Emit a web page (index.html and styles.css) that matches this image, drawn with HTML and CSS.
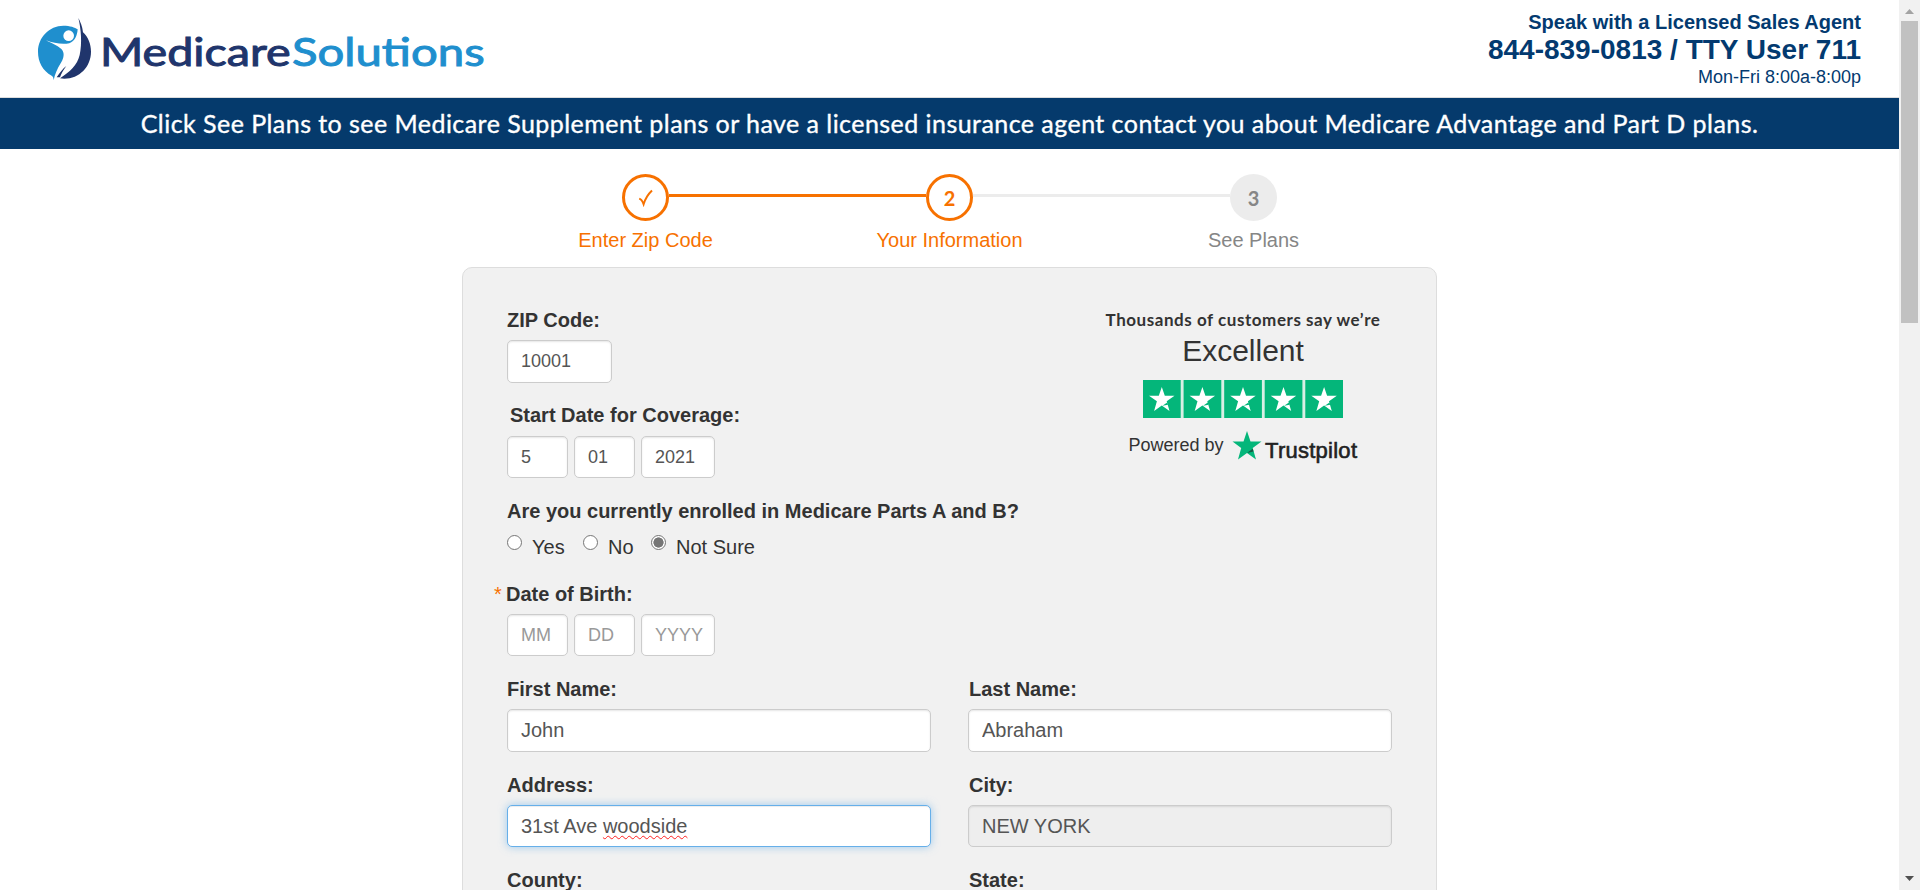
FILE: index.html
```html
<!DOCTYPE html>
<html lang="en">
<head>
<meta charset="utf-8">
<title>Medicare Solutions</title>
<link rel="stylesheet" href="styles.css">
</head>
<body>
<div class="page">
  <header class="header">
    <svg class="logo" viewBox="0 0 1440 270" role="img" aria-label="MedicareSolutions">
      <path fill="#1f8fce" d="M101 241C101 234 99 229 95 227C68 212 54 186 54 155C54 112 88 77 130 77C150 77 165 82 173 88C172 105 165 124 148 130C128 134 100 130 78 121C95 130 120 140 128 152C135 165 128 180 122 190C112 205 104 225 101 241Z"/>
      <circle cx="146" cy="107" r="16" fill="#fff"/>
      <path fill="#20356c" d="M175 54C185 73 188 86 189 97C204 110 213 132 213 155C213 200 178 236 133 236L120 235C150 215 172 195 179 165C187 130 183 85 175 54Z"/>
      <path fill="#20356c" d="M139 198C128 206 118 220 110 232L120 232C124 220 130 210 139 198Z"/>
      <text class="logo-text" x="240" y="197" textLength="572" lengthAdjust="spacingAndGlyphs" fill="#20356c" stroke="#20356c">Medicare</text>
      <text class="logo-text" x="816" y="197" textLength="578" lengthAdjust="spacingAndGlyphs" fill="#1f8fce" stroke="#1f8fce">Solutions</text>
    </svg>
    <div class="contact">
      <div class="contact-title">Speak with a Licensed Sales Agent</div>
      <div class="contact-phone">844-839-0813 / TTY User 711</div>
      <div class="contact-hours">Mon-Fri 8:00a-8:00p</div>
    </div>
  </header>
  <div class="banner"><span>Click See Plans to see Medicare Supplement plans or have a licensed insurance agent contact you about Medicare Advantage and Part D plans.</span></div>

  <div class="steps">
    <div class="step active"><div class="circle"><svg width="16" height="18" viewBox="0 0 16 18"><path d="M1.2 9.6C3 10.2 4.6 12.4 5.6 15.2C7.4 9.6 10.4 5 14 1.6" fill="none" stroke="#f77100" stroke-width="2"/></svg></div><div class="step-name">Enter Zip Code</div></div>
    <div class="line line-active"></div>
    <div class="step active"><div class="circle">2</div><div class="step-name">Your Information</div></div>
    <div class="line"></div>
    <div class="step"><div class="circle">3</div><div class="step-name">See Plans</div></div>
  </div>

  <main class="panel">
    <form class="form">
      <div class="row"><label>ZIP Code:</label><input class="input small zip" value="10001"></div>
      <div class="row row-tall start"><label>Start Date for Coverage:</label>
        <div class="date"><input class="input small" value="5"><input class="input small" value="01"><input class="input small year" value="2021"></div></div>
      <div class="row row-radio"><label>Are you currently enrolled in Medicare Parts A and B?</label>
        <div class="radios"><span class="radio"></span><span class="choice yes">Yes</span><span class="radio"></span><span class="choice no">No</span><span class="radio checked"></span><span class="choice">Not Sure</span></div></div>
      <div class="row dob"><label><span class="star">*</span>Date of Birth:</label>
        <div class="date"><input class="input small" placeholder="MM"><input class="input small" placeholder="DD"><input class="input small year" placeholder="YYYY"></div></div>
      <div class="pair">
        <div class="row row-tall"><label>First Name:</label><input class="input tall" value="John"></div>
        <div class="row row-tall right"><label>Last Name:</label><input class="input tall" value="Abraham"></div>
        <div class="row"><label>Address:</label><div class="input focused">31st Ave <span class="misspelled">woodside</span></div></div>
        <div class="row right"><label>City:</label><input class="input disabled" value="NEW YORK" readonly></div>
        <div class="row"><label>County:</label></div>
        <div class="row right"><label>State:</label></div>
      </div>
    </form>
    <aside class="trust">
      <div class="trust-title">Thousands of customers say we’re</div>
      <div class="trust-grade">Excellent</div>
      <svg class="rating" width="200" height="38" viewBox="0 0 200 38">
        <defs><g id="tile"><rect width="37.7" height="38" fill="#04b67a"/><path fill="#fff" d="M18.8 7L21.8 15.7H31.5L23.7 21.2L26.5 31L18.8 25.4L11.1 31L13.9 21.2L6 15.7H15.8Z"/><path fill="#04b67a" d="M19.5 25.8L25 24.8L24.2 22.5Z"/></g></defs>
        <rect width="200" height="38" fill="#d8efe5"/>
        <use href="#tile"/><use href="#tile" x="40.6"/><use href="#tile" x="81.2"/><use href="#tile" x="121.7"/><use href="#tile" x="162.3"/>
      </svg>
      <div class="powered"><span>Powered by</span>
        <svg width="126" height="36" viewBox="0 0 126 36"><path fill="#04b67a" d="M15 1L18.5 11.5H29.5L20.7 18L24 29.5L15 23L6 29.5L9.2 18L.5 11.5H11.5Z"/><path fill="#125a43" d="M15 23L21.5 21.5L20.7 18.7Z"/><text class="tp" x="33" y="27.5" textLength="92">Trustpilot</text></svg>
      </div>
    </aside>
  </main>
</div>
<div class="scrollbar">
  <svg class="arrow" width="21" height="21" viewBox="0 0 21 21"><path d="M6 14L10.5 9L15 14Z" fill="#a3a3a3"/></svg>
  <div class="thumb"></div>
  <svg class="arrow" width="21" height="21" viewBox="0 0 21 21"><path d="M6 7L10.5 12L15 7Z" fill="#505050"/></svg>
</div>
</body>
</html>
```
FILE: styles.css
```css
* { box-sizing: border-box; }
body {
  margin: 0; height: 890px; overflow: hidden; display: flex;
  font: 20px/28px "Liberation Sans", Arial, sans-serif; color: #333; background: #fff;
}
.page { flex: 1; height: 890px; overflow: hidden; }

.header {
  height: 98px; border-bottom: 1px solid #ddd; display: flex;
  justify-content: space-between; padding: 0 38px 0 20px; color: #033a70;
}
.logo { width: 480px; height: 90px; }
.logo-text { font: 400 118px Lato, sans-serif; stroke-width: 3; }
.contact { text-align: right; padding-top: 8px; white-space: nowrap; }
.contact-title { font-weight: bold; line-height: 28px; }
.contact-phone { font-weight: bold; font-size: 28px; line-height: 28px; }
.contact-hours { font-size: 18px; line-height: 26px; }

.banner {
  height: 51px; background: #053a6c; color: #fff; text-align: center;
  font: 400 25px/50px Lato, sans-serif; white-space: nowrap; letter-spacing: 0.45px;
  -webkit-text-stroke: 0.35px #fff;
}

.steps { display: flex; justify-content: center; padding-top: 25px; height: 118px; }
.step { width: 47px; display: flex; flex-direction: column; align-items: center; color: #868686; white-space: nowrap; }
.circle {
  width: 47px; height: 47px; flex: none; border-radius: 50%; background: #ececec;
  display: flex; align-items: center; justify-content: center;
  font: bold 20px/24px Lato, sans-serif;
}
.step-name { margin-top: 5px; }
.active { color: #f77100; }
.active .circle { background: #fff; border: 3px solid #f77100; }
.line { width: 257px; height: 3px; margin-top: 20px; background: #ececec; }
.line-active { background: #f77100; }

.panel {
  width: 975px; height: 800px; margin: 0 auto; border: 1px solid #ddd; border-radius: 10px;
  background: #f1f1f1; padding: 38px 44px; display: flex;
}
.form { width: 541px; flex: none; }
.row { height: 95px; }
.row-tall { height: 96px; }
.row-radio { height: 83px; }
.row label { display: block; height: 34px; font-weight: bold; white-space: nowrap; }
.start label { height: 35px; padding-left: 3px; }
.dob label { margin-left: -13px; }
.star { color: #f77100; font-weight: normal; display: inline-block; width: 12px; }
.pair { width: 885px; display: grid; grid-template-columns: 424px 424px; column-gap: 37px; }
.right label { padding-left: 1px; }

.input {
  display: block; width: 424px; height: 42px; margin: 0; padding: 0 13px;
  border: 1px solid #ccc; border-radius: 5px; background: #fff; color: #555;
  font: 20px/40px "Liberation Sans", Arial, sans-serif;
  box-shadow: inset 0 1px 2px rgba(0, 0, 0, .1); outline: none; white-space: nowrap;
}
.input::placeholder { color: #999; opacity: 1; }
.tall { height: 43px; }
.small { width: 61px; font-size: 18px; padding-right: 0; }
.zip { width: 105px; height: 43px; }
.year { width: 74px; }
.date { display: flex; gap: 6px; }
.focused { border-color: #66afe9; box-shadow: inset 0 1px 1px rgba(0, 0, 0, .075), 0 0 8px rgba(102, 175, 233, .6); }
.disabled { background: #eee; }
.misspelled { text-decoration: underline wavy #f22 1px; text-underline-offset: 2px; text-decoration-skip-ink: none; }

.radios { display: flex; padding-top: 2px; }
.radio {
  width: 15px; height: 15px; margin: 2px 10px 0 0; border: 1px solid #767676;
  border-radius: 50%; background: #fff;
}
.checked { background: radial-gradient(circle, #767676 4.8px, #fff 5.4px); }
.choice { white-space: nowrap; }
.yes { width: 51px; }
.no { width: 43px; }

.trust { width: 345px; display: flex; flex-direction: column; align-items: center; padding-left: 45px; margin-right: -6px; }
.trust-title { font: bold 17px/28px Lato, sans-serif; letter-spacing: 0.55px; white-space: nowrap; }
.trust-grade { font-size: 30px; line-height: 34px; }
.rating { margin-top: 12px; }
.powered { display: flex; gap: 8px; margin-top: 12px; font-size: 18px; }
.powered span { line-height: 30px; white-space: nowrap; }
.tp { font: 22px "Liberation Sans", Arial, sans-serif; fill: #222; stroke: #222; stroke-width: .6; }

.scrollbar { width: 21px; height: 890px; background: #f1f1f1; display: flex; flex-direction: column; align-items: center; }
.thumb { width: 17px; height: 302px; background: #c1c1c1; margin-bottom: auto; }
.arrow { flex: none; }
```
